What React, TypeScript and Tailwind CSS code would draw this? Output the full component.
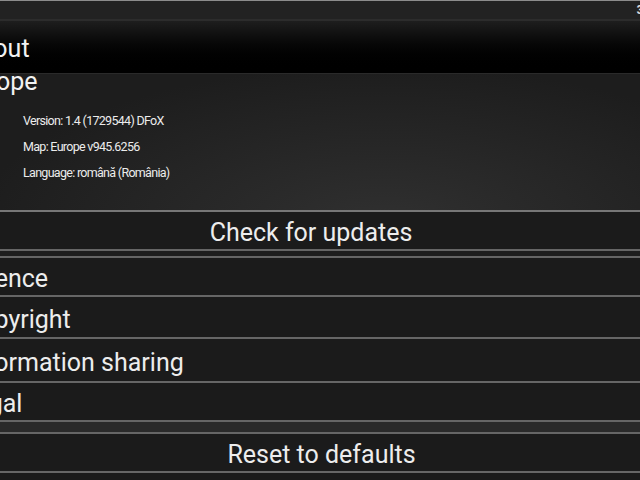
import React from "react";

const Row = ({ label, h, ml }: { label: string; h: string; ml: string }) => (
  <div className={`${h} flex items-center bg-[#1b1b1b] border-b-2 border-[#666]`}>
    <span className={`${ml} mt-[4px] whitespace-nowrap text-[25px] leading-none text-[#ededed]`}>{label}</span>
  </div>
);

export default function App() {
  return (
    <div
      className="w-[640px] h-[480px] overflow-hidden bg-[#1c1c1c] flex flex-col"
      style={{ fontFamily: "Roboto, 'Open Sans', sans-serif" }}
    >
      {/* status bar */}
      <div className="h-[19px] shrink-0 border-t border-[#8c8c8c] bg-[#222] flex justify-end">
        <span className="mr-[-4px] mt-[2px] text-[13px] leading-none font-bold text-[#ddd]">3</span>
      </div>
      {/* header */}
      <div className="h-[55px] shrink-0 flex items-center border-t-2 border-[#2c2c2c] border-b border-b-[#2a2a2a] bg-gradient-to-b from-[#1e1e1e] via-[#050505] to-[#000]">
        <span className="ml-[-37px] mt-[2px] whitespace-nowrap text-[25px] leading-none text-[#f2f2f2]">About</span>
      </div>
      {/* info section */}
      <div className="h-[138px] shrink-0 flex flex-col bg-[radial-gradient(ellipse_at_60%_110%,#303030,#1d1d1d_75%)] border-b-2 border-[#777]">
        <span className="ml-[-40px] mt-[-5px] whitespace-nowrap text-[25px] leading-none text-[#f2f2f2]">Europe</span>
        <div className="ml-[23px] mt-[21px] flex flex-col gap-[13.5px] text-[12.5px] leading-none text-[#ececec] tracking-[-0.7px]">
          <span>Version: 1.4 (1729544) DFoX</span>
          <span>Map: Europe v945.6256</span>
          <span>Language: română (România)</span>
        </div>
      </div>
      {/* check for updates */}
      <div className="h-[39px] shrink-0 flex items-center justify-center bg-[#1b1b1b] border-b-2 border-[#666]">
        <span className="ml-[-18px] mt-[4px] whitespace-nowrap text-[25px] leading-none text-[#ededed]">Check for updates</span>
      </div>
      <div className="h-[7px] shrink-0 bg-[#1e1e1e] border-b-2 border-[#666]" />
      <Row label="Licence" h="h-[39px]" ml="ml-[-38px]" />
      <Row label="Copyright" h="h-[42px]" ml="ml-[-36px]" />
      <Row label="Information sharing" h="h-[44px]" ml="ml-[-35px]" />
      <Row label="Legal" h="h-[39px]" ml="ml-[-38px]" />
      <div className="h-[12px] shrink-0 bg-[#2a2a2a] border-b-2 border-[#666]" />
      <div className="h-[39px] shrink-0 flex items-center justify-center bg-[#1b1b1b] border-b-2 border-[#666]">
        <span className="ml-[3px] mt-[4px] whitespace-nowrap text-[25px] leading-none text-[#ededed]">Reset to defaults</span>
      </div>
      <div className="flex-1 bg-[#1a1a1a]" />
    </div>
  );
}
